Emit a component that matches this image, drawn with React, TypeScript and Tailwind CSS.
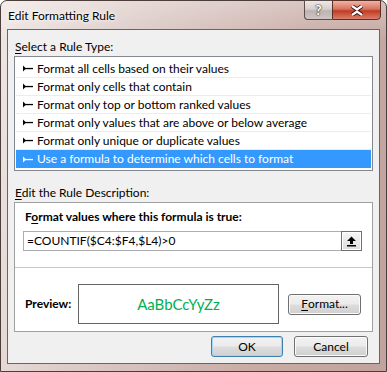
import type { ReactNode } from "react";

const RULE_TYPES = [
  "Format all cells based on their values",
  "Format only cells that contain",
  "Format only top or bottom ranked values",
  "Format only values that are above or below average",
  "Format only unique or duplicate values",
  "Use a formula to determine which cells to format",
];

function cn(...parts: (string | false | undefined)[]) {
  return parts.filter(Boolean).join(" ");
}

function Bullet({ light }: { light?: boolean }) {
  const c = light ? "#ffffff" : "#000000";
  return (
    <svg width="10" height="7" viewBox="0 0 10 7" className="shrink-0">
      <path d="M0 0.5 L3 3.5 L0 6.5 Z" fill={c} />
      <rect x="0" y="2.9" width="10" height="1.3" fill={c} />
    </svg>
  );
}

function WinButton({
  children,
  focused,
  className,
}: {
  children: ReactNode;
  focused?: boolean;
  className?: string;
}) {
  return (
    <button
      type="button"
      className={cn(
        "flex h-[21px] items-center justify-center rounded-[3px] border text-[12px] leading-none text-black",
        "bg-[linear-gradient(#f2f2f2_0%,#ebebeb_48%,#dddddd_52%,#cfcfcf_100%)]",
        focused
          ? "border-[#3c7fb1] shadow-[inset_0_0_0_1px_#a6d6f6]"
          : "border-[#707070] shadow-[inset_0_0_0_1px_#fbfbfb]",
        className,
      )}
    >
      {children}
    </button>
  );
}

function CollapseIcon() {
  return (
    <svg width="11" height="11" viewBox="0 0 11 11">
      <path d="M5.5 0.5 L10 5 L7 5 L7 8 L4 8 L4 5 L1 5 Z" fill="#000" />
      <rect x="1" y="9" width="9" height="1.5" fill="#000" />
    </svg>
  );
}

export default function App() {
  return (
    <div className="h-[372px] w-[387px] bg-white font-[Lato,sans-serif] text-[12px] text-black">
      <div className="flex h-full flex-col rounded-t-[7px] border border-[#4a3d3a] bg-[linear-gradient(180deg,rgba(255,255,255,0.3)_0px,rgba(255,255,255,0)_40px),linear-gradient(100deg,#eee6e3_0%,#dccbc7_30%,#c9aca6_70%,#c1a39d_100%)] px-[6px] pb-[7px]">
        {/* title bar */}
        <div className="flex h-[28px] items-start">
          <span className="ml-px mt-[7px] leading-[16px] [text-shadow:0_0_6px_#ffffff,0_0_3px_#ffffff]">
            Edit Formatting Rule
          </span>
          <div className="-mt-px ml-auto mr-[-1px] flex">
            <div className="flex h-[20px] w-[28px] items-center justify-center rounded-bl-[4px] border border-r-0 border-[#5b4d4a] bg-[linear-gradient(#eee8e6_0%,#d7cfcd_45%,#bdb3b1_55%,#cfc7c5_100%)] text-[14px] font-bold leading-none text-white [text-shadow:0_0_2px_#333,0_0_1px_#000]">
              ?
            </div>
            <div className="flex h-[20px] w-[49px] items-center justify-center rounded-br-[4px] border border-[#5b3027] bg-[linear-gradient(#eeb3a5_0%,#d9735f_45%,#c13b22_55%,#d8806b_100%)]">
              <svg width="14" height="11" viewBox="0 0 14 11">
                <path
                  d="M2 1 L7 4.5 L12 1 M2 10 L7 6.5 L12 10"
                  stroke="#3b1510"
                  strokeWidth="4"
                  fill="none"
                />
                <path
                  d="M2 1 L7 4.5 L12 1 M2 10 L7 6.5 L12 10"
                  stroke="#ffffff"
                  strokeWidth="2.2"
                  fill="none"
                />
              </svg>
            </div>
          </div>
        </div>

        {/* client area */}
        <div className="flex flex-1 flex-col border border-[#6d6361] bg-[#f0f0f0] px-[6px] pt-[9px]">
          <div className="ml-px leading-[16px]">
            <span className="underline underline-offset-[2px]">S</span>elect a Rule Type:
          </div>
          <div className="mt-px border border-[#828790] bg-white px-px pb-[2px] pt-[3px]">
            {RULE_TYPES.map((t, i) => {
              const sel = i === RULE_TYPES.length - 1;
              return (
                <div
                  key={t}
                  className={cn(
                    "flex h-[18px] items-center gap-[4px] pl-[7px]",
                    sel ? "bg-[#3399ff] text-white" : "border-b border-[#ececec]",
                  )}
                >
                  <Bullet light={sel} />
                  <span className="leading-none">{t}</span>
                </div>
              );
            })}
          </div>

          <div className="ml-px mt-[14px] leading-[16px]">
            <span className="underline underline-offset-[2px]">E</span>dit the Rule Description:
          </div>
          <div className="mt-px h-[130px] border border-[#a0a0a0] bg-white">
            <div className="ml-[10px] mt-[6px] font-bold leading-[16px]">
              F<span className="underline underline-offset-[2px]">o</span>rmat values where this
              formula is true:
            </div>
            <div className="ml-[8px] mt-[6px] flex h-[20px] w-[339px] items-center border border-[#abadb3]">
              <span className="ml-[3px] leading-none">=COUNTIF($C4:$F4,$L4)&gt;0</span>
              <div className="-my-px -mr-px ml-auto flex h-[20px] w-[21px] items-center justify-center border border-[#707070] bg-[linear-gradient(#f6f6f6,#dcdcdc)] shadow-[inset_0_0_0_1px_#ffffff]">
                <CollapseIcon />
              </div>
            </div>
            <div className="mt-[16px] h-px bg-[#c8c8c8]" />
            <div className="mt-[16px] flex items-center">
              <div className="ml-[10px] w-[53px] font-bold">Preview:</div>
              <div className="flex h-[40px] w-[201px] items-center justify-center border border-[#646464] bg-white font-[Lato,sans-serif] text-[15px] text-[#00b050]">
                AaBbCcYyZz
              </div>
              <WinButton className="ml-[9px] w-[73px]">
                <span className="underline underline-offset-[2px]">F</span>ormat...
              </WinButton>
            </div>
          </div>

          <div className="mr-[5px] mt-[4px] flex justify-end gap-[11px]">
            <WinButton focused className="w-[72px]">
              OK
            </WinButton>
            <WinButton className="w-[74px]">Cancel</WinButton>
          </div>
        </div>
      </div>
    </div>
  );
}
